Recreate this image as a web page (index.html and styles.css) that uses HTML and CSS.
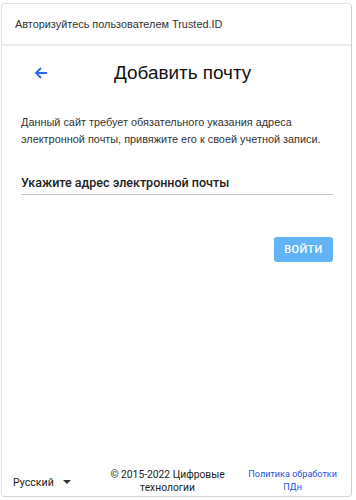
FILE: index.html
```html
<!DOCTYPE html>
<html lang="ru">
<head>
  <meta charset="UTF-8" />
  <meta name="viewport" content="width=device-width, initial-scale=1" />
  <title>Добавить почту</title>
  <link rel="stylesheet" href="styles.css">
</head>
<body>
  <div class="auth-card">
    <div class="auth-header">Авторизуйтесь пользователем Trusted.ID</div>

    <div class="auth-body">
      <div class="title-row">
        <button class="back-btn" aria-label="Назад">
          <svg width="14" height="14" viewBox="0 0 14 14">
            <path d="M13 7H2M7 2L2 7l5 5" fill="none" stroke="#2962ff" stroke-width="1.8" />
          </svg>
        </button>
        <h2>Добавить почту</h2>
      </div>

      <p class="hint">Данный сайт требует обязательного указания адреса электронной почты, привяжите его к своей учетной записи.</p>

      <div class="field">
        <input type="email" id="email" placeholder="Укажите адрес электронной почты" />
      </div>

      <div class="actions">
        <button class="login-btn" disabled>Войти</button>
      </div>
    </div>

    <div class="auth-footer">
      <div class="lang">Русский <span class="caret"></span></div>
      <div class="copy">© 2015-2022 Цифровые<br>технологии</div>
      <a class="policy" href="#">Политика обработки<br>ПДн</a>
    </div>
  </div>
</body>
</html>
```

FILE: styles.css
```css
body {
  margin: 0;
  font-family: "Liberation Sans", Arial, sans-serif;
  background: #fff;
}
.auth-card {
  margin: 3px 4px 0 1px;
  height: 494px;
  border: 1px solid #e2e2e2;
  border-right-color: #cfcfcf;
  border-bottom-color: #d4d4d4;
  border-radius: 4px;
  box-sizing: border-box;
  display: flex;
  flex-direction: column;
}
.auth-header {
  height: 40px;
  display: flex;
  align-items: center;
  padding-left: 13px;
  font-size: 10.9px;
  color: #333;
  border-bottom: 2px solid #ebebeb;
}
.auth-body {
  flex: 1;
  padding: 0 18px 0 19px;
}
.title-row {
  display: flex;
  align-items: center;
  height: 40px;
  margin-top: 7px;
}
.back-btn {
  width: 40px;
  height: 40px;
  border: none;
  background: none;
  padding: 0;
  display: flex;
  align-items: center;
  justify-content: center;
  cursor: pointer;
}
.title-row h2 {
  margin: 0 0 0 53px;
  font-size: 18.9px;
  font-weight: 400;
  color: #111;
}
.hint {
  margin: 21px 0 0;
  font-size: 10.9px;
  line-height: 17px;
  color: #333;
}
.field {
  margin-top: 24px;
  border-bottom: 1px solid #c4c4c4;
}
.field input {
  width: 100%;
  border: none;
  outline: none;
  padding: 3px 0 4px;
  font-family: Roboto, "Liberation Sans", sans-serif;
  font-size: 12.5px;
  font-weight: 500;
  color: #222;
  background: none;
}
.field input::placeholder {
  color: #222;
  opacity: 1;
}
.actions {
  display: flex;
  justify-content: flex-end;
  margin-top: 42px;
}
.login-btn {
  width: 59px;
  height: 25px;
  border: none;
  border-radius: 3px;
  background: #61b4f8;
  color: #fff;
  font-family: Roboto, sans-serif;
  font-size: 11px;
  font-weight: 500;
  text-transform: uppercase;
  letter-spacing: 0.3px;
}
.auth-footer {
  display: flex;
  align-items: center;
  justify-content: space-between;
  padding: 0 14px 2px 11px;
  font-family: Roboto, sans-serif;
  font-size: 10px;
}
.lang {
  font-size: 10.6px;
  color: #222;
  display: flex;
  align-items: center;
  gap: 9px;
  margin-top: 2px;
}
.caret {
  width: 0;
  height: 0;
  border-left: 4px solid transparent;
  border-right: 4px solid transparent;
  border-top: 4px solid #333;
}
.copy {
  text-align: center;
  color: #222;
  font-size: 10.3px;
  line-height: 13px;
  margin-left: 16px;
}
.policy {
  text-align: center;
  color: #1f4fe0;
  font-size: 9.1px;
  line-height: 13px;
  text-decoration: none;
}
```
